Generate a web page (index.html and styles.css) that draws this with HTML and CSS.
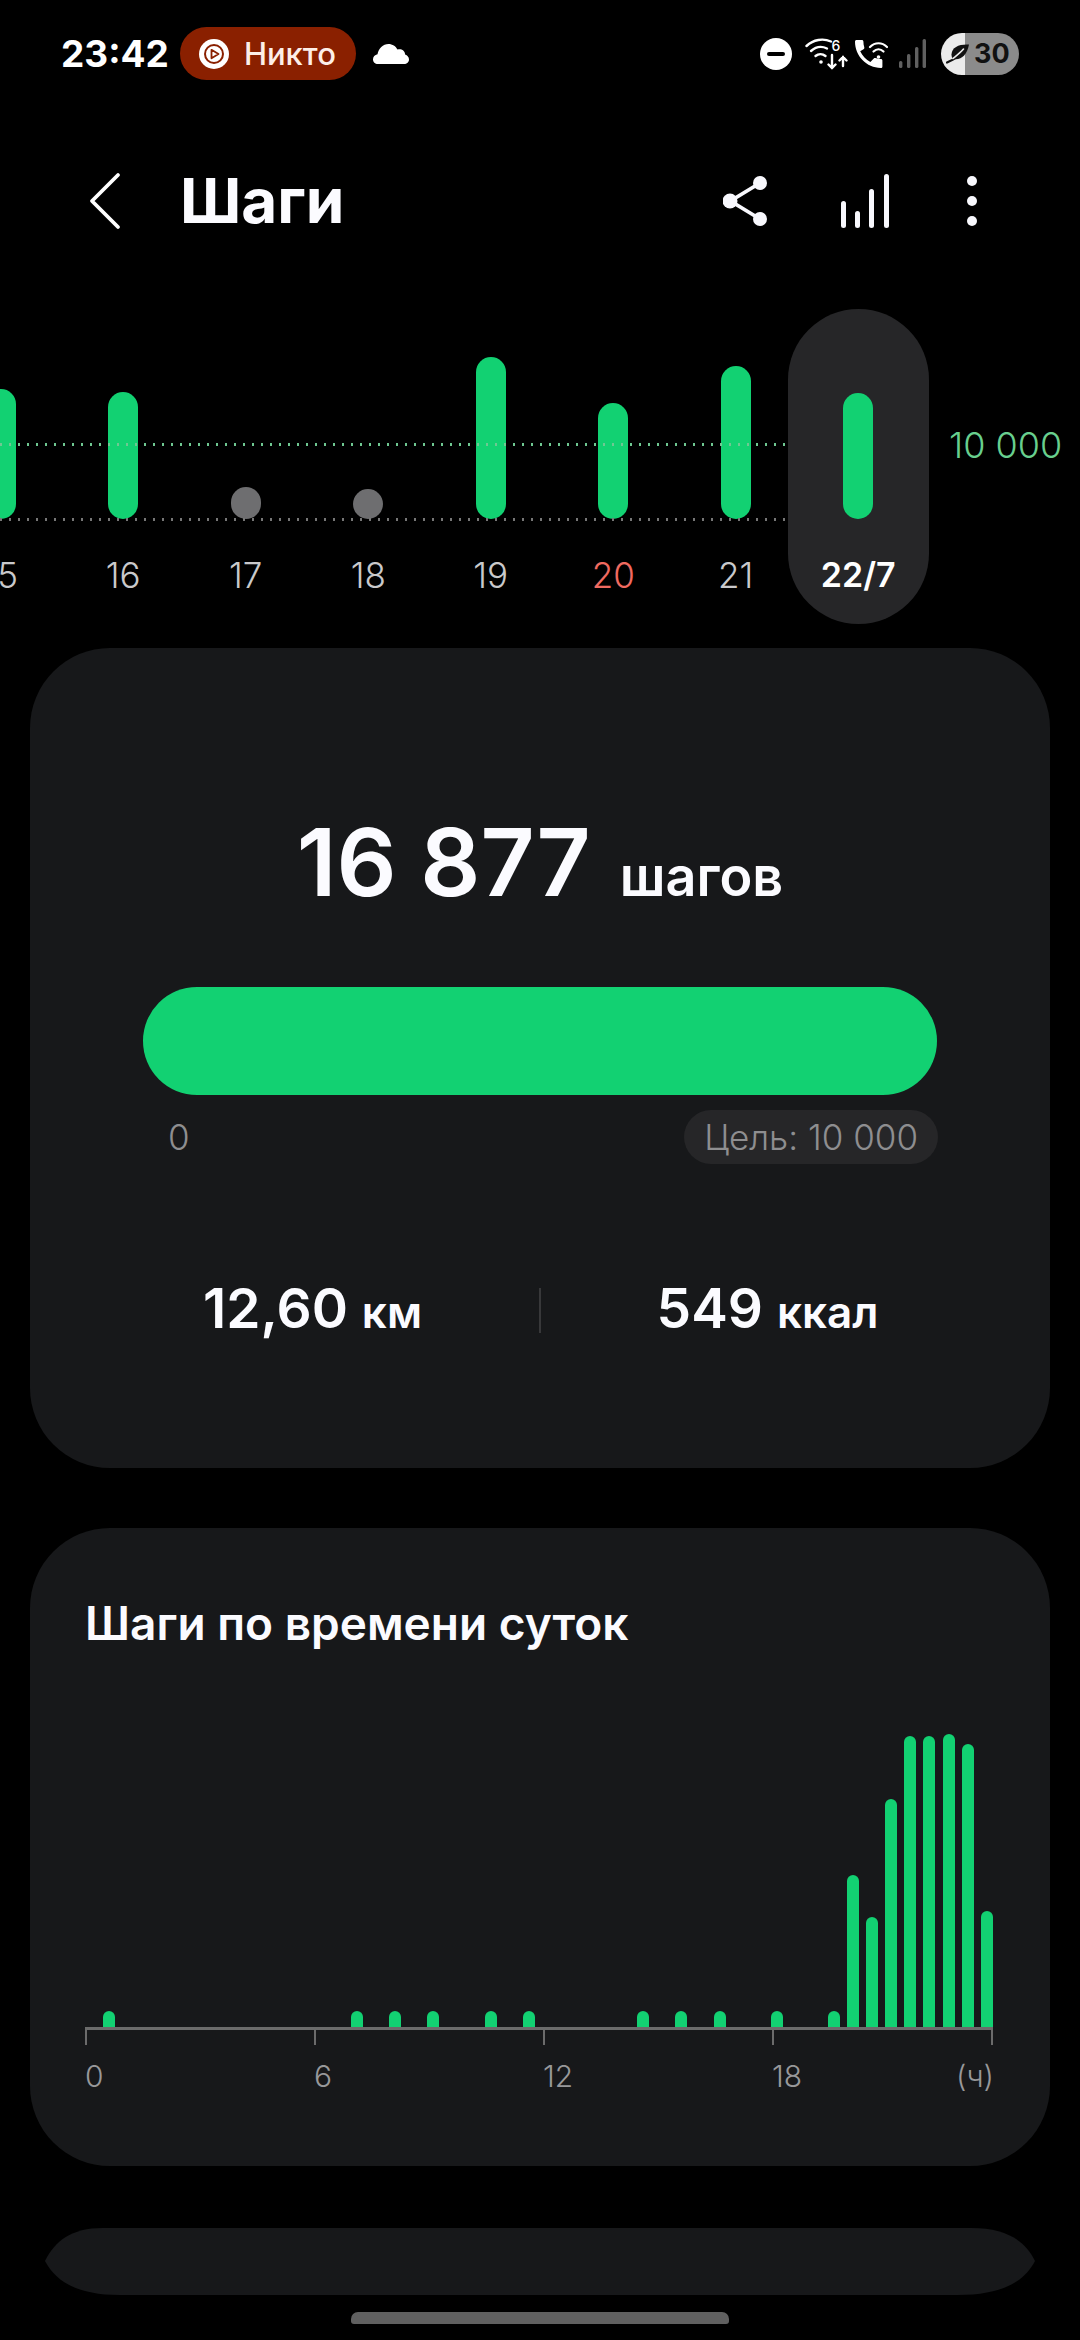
FILE: index.html

```html
<!DOCTYPE html>
<html lang="ru">
<head>
  <meta charset="UTF-8">
  <title>Шаги</title>
  <link rel="stylesheet" href="styles.css">
</head>
<body>

<div class="status">
  <span class="time">23:42</span>
  <div class="call-pill">
    <svg width="30" height="30" viewBox="0 0 30 30">
      <circle cx="15" cy="15" r="15" fill="#fff"/>
      <circle cx="15" cy="15" r="9" fill="none" stroke="#8a2000" stroke-width="2"/>
      <path d="M12.5 10.8 19.5 15l-7 4.2z" fill="none" stroke="#8a2000" stroke-width="1.8" stroke-linejoin="round"/>
    </svg>
    <span>Никто</span>
  </div>
  <svg class="cloud" width="36" height="20" viewBox="0 0 36 20">
    <path fill="#fff" d="M5 20C2 20 0 18 0 15.2 0 12.7 1.8 10.800 4.500 10.300 5.500 4.500 10 0 15.500 0c3.900 0 7.300 2.200 9 5.600C26 5 27.500 5 28.500 5.500c2.200.8 3.500 2.700 3.600 5 2.300.9 3.900 2.700 3.900 5C36 18 34 20 31 20z"/>
  </svg>

  <div class="status-right">
    <svg width="32" height="32" viewBox="0 0 32 32">
      <circle cx="16" cy="16" r="16" fill="#fff"/>
      <rect x="7" y="14" width="18" height="4" rx="2" fill="#000"/>
    </svg>
    <svg class="wifi6" width="43" height="32" viewBox="0 0 43 32" fill="none" stroke="#fff" stroke-width="2.400" stroke-linecap="round">
      <path d="M1.500 8C8.500 1.500 18 0 26 3.500"/>
      <path d="M6 13c5-4.500 11-5 16-2.500"/>
      <path d="M10.500 18c3-2.500 7-2.500 10 0"/>
      <circle cx="16" cy="24" r="1.800" fill="#fff" stroke="none"/>
      <path d="M27 17v13M23.500 26.500 27 30l3.500-3.500M38 28V19M34.500 22.500 38 19l3.500 3.500"/>
      <text x="26.500" y="13" class="wifi-six">6</text>
    </svg>
    <svg class="vowifi" width="33" height="28" viewBox="0 0 33 28" fill="none" stroke="#fff" stroke-width="2.200" stroke-linecap="round">
      <path fill="#fff" stroke="none" d="M5.200 11.300c2.200 4.600 5.800 8.300 10.200 10.700l3.400-3.500c.4-.5 1-.6 1.600-.4 1.700.6 3.600.9 5.500.9.800 0 1.500.7 1.500 1.600v5.800c0 .900-.7 1.600-1.500 1.600C11.400 28 0 15.900 0 1.600 0 .7.700 0 1.500 0h5.400c.8 0 1.500.7 1.500 1.600 0 2 .3 3.900.9 5.700.2.600 0 1.200-.4 1.600z"/>
      <path d="M15 7c5-5 12-5 17 0"/>
      <path d="M18.500 11.500c3-3 7-3 10 0"/>
      <circle cx="23.500" cy="17" r="1.800" fill="#fff" stroke="none"/>
    </svg>
    <svg class="signal" width="27" height="29" viewBox="0 0 27 29" fill="#606060">
      <rect x="0" y="22" width="3.400" height="7" rx="1.500"/>
      <rect x="8" y="15" width="3.400" height="14" rx="1.500"/>
      <rect x="16" y="8" width="3.400" height="21" rx="1.500"/>
      <rect x="23.600" y="0" width="3.400" height="29" rx="1.500"/>
    </svg>
    <div class="battery">
      <svg width="23" height="20" viewBox="0 0 23 20">
        <path d="M23 .5C13 0 6 3 5.500 10.500c0 2 .6 3.600 1.900 4.500C15 16.500 21 11 23 .5z" fill="#111"/>
        <path d="M1 18.500C6 16 11 15 13 8" fill="none" stroke="#111" stroke-width="2.200" stroke-linecap="round"/>
        <path d="M7 14.500C10 12 14 9 17.500 5" fill="none" stroke="#ebebeb" stroke-width="1.600" stroke-linecap="round"/>
      </svg>
      <span>30</span>
    </div>
  </div>
</div>

<header class="topbar">
  <svg class="back" width="32" height="58" viewBox="0 0 32 58" fill="none" stroke="#fff" stroke-width="3.800" stroke-linecap="round" stroke-linejoin="round">
    <path d="M29 3 3 29l26 26"/>
  </svg>
  <h1>Шаги</h1>
  <div class="actions">
    <svg width="44" height="50" viewBox="0 0 44 50" fill="#f8f8fd">
      <path d="M37 7 7.500 25 37 43" fill="none" stroke="#f8f8fd" stroke-width="3.800"/>
      <circle cx="37" cy="7" r="7"/>
      <circle cx="7" cy="25" r="7.500"/>
      <circle cx="37" cy="43" r="7"/>
    </svg>
    <svg class="act-chart" width="48" height="54" viewBox="0 0 48 54" fill="#f8f8fd">
      <rect x="0" y="27" width="5" height="27" rx="2.500"/>
      <rect x="14" y="37" width="5" height="17" rx="2.500"/>
      <rect x="28" y="15" width="5" height="39" rx="2.500"/>
      <rect x="43" y="0" width="5" height="54" rx="2.500"/>
    </svg>
    <div class="more"><i></i><i></i><i></i></div>
  </div>
</header>

<section class="week">
  <div class="guide guide-goal"></div>
  <div class="guide guide-zero"></div>
  <span class="goal-label">10 000</span>

  <div class="days">
    <div class="day"><div class="plot"><div class="bar" style="height:130px"></div></div><span>15</span></div>
    <div class="day"><div class="plot"><div class="bar" style="height:127px"></div></div><span>16</span></div>
    <div class="day"><div class="plot"><div class="bar rest" style="height:32px"></div></div><span>17</span></div>
    <div class="day"><div class="plot"><div class="bar rest" style="height:30px"></div></div><span>18</span></div>
    <div class="day"><div class="plot"><div class="bar" style="height:162px"></div></div><span>19</span></div>
    <div class="day"><div class="plot"><div class="bar" style="height:116px"></div></div><span class="sunday">20</span></div>
    <div class="day"><div class="plot"><div class="bar" style="height:153px"></div></div><span>21</span></div>
    <div class="day selected"><div class="plot"><div class="bar" style="height:126px"></div></div><span>22/7</span></div>
  </div>
</section>

<section class="card card-total">
  <div class="total">
    <span class="total-num">16 877</span>
    <span class="total-unit">шагов</span>
  </div>
  <div class="progress"></div>
  <div class="progress-meta">
    <span>0</span>
    <span class="goal-chip">Цель: 10 000</span>
  </div>
  <div class="stats">
    <div class="stat">12,60 <small>км</small></div>
    <div class="stat-sep"></div>
    <div class="stat">549 <small>ккал</small></div>
  </div>
</section>

<section class="card card-hours">
  <h2>Шаги по времени суток</h2>
  <div class="hour-bars">
    <i style="grid-column:2;height:16px"></i>
    <i style="grid-column:15;height:16px"></i>
    <i style="grid-column:17;height:16px"></i>
    <i style="grid-column:19;height:16px"></i>
    <i style="grid-column:22;height:16px"></i>
    <i style="grid-column:24;height:16px"></i>
    <i style="grid-column:30;height:16px"></i>
    <i style="grid-column:32;height:16px"></i>
    <i style="grid-column:34;height:16px"></i>
    <i style="grid-column:37;height:16px"></i>
    <i style="grid-column:40;height:16px"></i>
    <i style="grid-column:41;height:152px"></i>
    <i style="grid-column:42;height:110px"></i>
    <i style="grid-column:43;height:228px"></i>
    <i style="grid-column:44;height:291px"></i>
    <i style="grid-column:45;height:291px"></i>
    <i style="grid-column:46;height:293px"></i>
    <i style="grid-column:47;height:283px"></i>
    <i style="grid-column:48;height:116px"></i>
  </div>
  <div class="axis"><i></i><i></i><i></i><i></i><i></i></div>
  <div class="hour-labels">
    <span>0</span><span>6</span><span>12</span><span>18</span><span class="hour-unit">(ч)</span>
  </div>
</section>

<svg class="next-card" width="990" height="67" viewBox="0 0 990 67">
  <path fill="#17181a" d="M0 33C10 13 26 0 58 0H926C962 0 980 13 990 33 980 52 960 67 912 67H75C30 67 10 52 0 33z"/>
</svg>

<div class="home-bar"></div>

</body>
</html>
```

FILE: styles.css

```css
* { box-sizing: border-box; }
body { margin: 0; width: 1080px; height: 2340px; overflow: hidden; background: #000; color: #fbfbff; font-family: Inter, "Noto Sans", sans-serif; }
svg { display: block; flex: none; }

/* status bar */
.status { display: flex; align-items: center; height: 53px; margin-top: 27px; padding: 0 61px 0 61px; }
.time { font-size: 37px; font-weight: 700; color: #fff; margin-right: 11px; }
.call-pill { display: flex; align-items: center; gap: 15px; height: 53px; padding: 0 20px 0 19px; background: #8a2000; border-radius: 27px; font-size: 31px; font-weight: 500; color: #fdeee8; }
.cloud { margin-left: 17px; }
.status-right { display: flex; align-items: center; margin-left: auto; }
.wifi6 { margin-left: 13px; }
.wifi-six { font-family: Inter, sans-serif; font-size: 14px; font-weight: 500; fill: #fff; stroke: none; }
.vowifi { margin-left: 7px; }
.signal { margin-left: 11px; }
.battery { display: flex; align-items: center; gap: 5px; width: 78px; height: 42px; margin-left: 15px; padding-left: 5px; border-radius: 21px; background: linear-gradient(90deg, #ebebeb 24px, #8b8b8b 24px); color: #111; font-size: 27px; font-weight: 700; }

/* top bar */
.topbar { display: flex; align-items: center; height: 80px; margin-top: 81px; padding: 0 103px 0 89px; }
.topbar h1 { margin: 0 0 0 59px; font-size: 62px; font-weight: 700; line-height: 80px; }
.actions { display: flex; align-items: center; margin-left: auto; }
.act-chart { margin-left: 74px; }
.more { display: flex; flex-direction: column; gap: 10px; margin-left: 78px; }
.more i { display: block; width: 10px; height: 10px; border-radius: 50%; background: #f8f8fd; }

/* week strip */
.week { position: relative; height: 315px; margin-top: 68px; }
.days { display: flex; margin-left: -60.500px; }
.day { display: flex; flex-direction: column; align-items: center; width: 122.5px; height: 315px; }
.day.selected { position: relative; width: 141px; margin: 0 -9.25px; border-radius: 71px; background: #262628; }
.plot { display: flex; align-items: flex-end; height: 210px; }
.bar { width: 30px; border-radius: 15px; background: #12d172; box-shadow: 0 0 0 3px #000; }
.bar.rest { background: #6e6e70; }
.selected .bar { box-shadow: none; }
.day span { margin-top: 35px; font-size: 35px; line-height: 42px; font-weight: 300; color: #c9c9cb; }
.day .sunday { color: #f06a60; }
.selected span { font-weight: 600; font-size: 34px; color: #fff; }
.guide { position: absolute; left: 0; width: 785px; height: 3px; background-size: 9px 3px; }
.guide-goal { top: 134px; background-image: linear-gradient(90deg, #6fc892 2px, transparent 2px); }
.guide-zero { top: 209px; background-image: linear-gradient(90deg, #777 2px, transparent 2px); }
.goal-label { position: absolute; left: 949px; top: 115px; font-size: 36px; line-height: 42px; font-weight: 300; color: #68cf8e; }

/* cards */
.card { margin: 0 30px; border-radius: 80px; background: #17181a; }
.card-total { height: 820px; margin-top: 24px; padding-top: 164px; }
.total { display: flex; justify-content: center; align-items: baseline; gap: 29px; line-height: 100px; }
.total-num { font-size: 94px; font-weight: 600; }
.total-unit { font-size: 54px; font-weight: 600; }
.progress { height: 108px; margin: 60px 113px 0; border-radius: 54px; background: #12d172; }
.progress-meta { display: flex; justify-content: space-between; align-items: center; margin: 15px 112px 0 113px; padding-left: 25px; font-size: 35px; font-weight: 300; color: #8e8e90; }
.goal-chip { height: 54px; line-height: 54px; padding: 0 20px; border-radius: 27px; background: #262628; }
.stats { display: grid; grid-template-columns: 1fr 2px 1fr; align-items: center; margin-top: 114px; padding: 0 56px; }
.stat { font-size: 55px; font-weight: 600; line-height: 60px; text-align: center; }
.stat small { font-size: 44px; font-weight: 600; }
.stat-sep { height: 45px; background: #38383a; }

.card-hours { height: 638px; margin-top: 60px; padding: 67px 55px 0; }
.card-hours h2 { margin: 0; font-size: 46px; font-weight: 600; line-height: 56px; }
.hour-bars { display: grid; grid-template-columns: repeat(48, 19.08px); align-items: end; height: 300px; margin: 76px 0 0 -1px; }
.hour-bars i { grid-row: 1; width: 12px; border-radius: 6px 6px 0 0; background: #12d172; }
.axis { display: grid; grid-template-columns: repeat(3, 229px) 219px 2px; width: 908px; height: 18px; border-top: 3px solid #6b6b6b; }
.axis i { width: 2px; background: #6b6b6b; }
.hour-labels { display: grid; grid-template-columns: repeat(3, 229px) 165px 1fr; width: 909px; margin-top: 13px; font-size: 30px; font-weight: 300; line-height: 36px; color: #98989a; }
.hour-unit { text-align: right; }

/* peek of the next card + gesture bar */
.next-card { margin: 62px 0 0 45px; }
.home-bar { width: 378px; height: 12px; margin: 17px auto 0; border-radius: 7px 7px 3px 3px; background: #606060; }
```
